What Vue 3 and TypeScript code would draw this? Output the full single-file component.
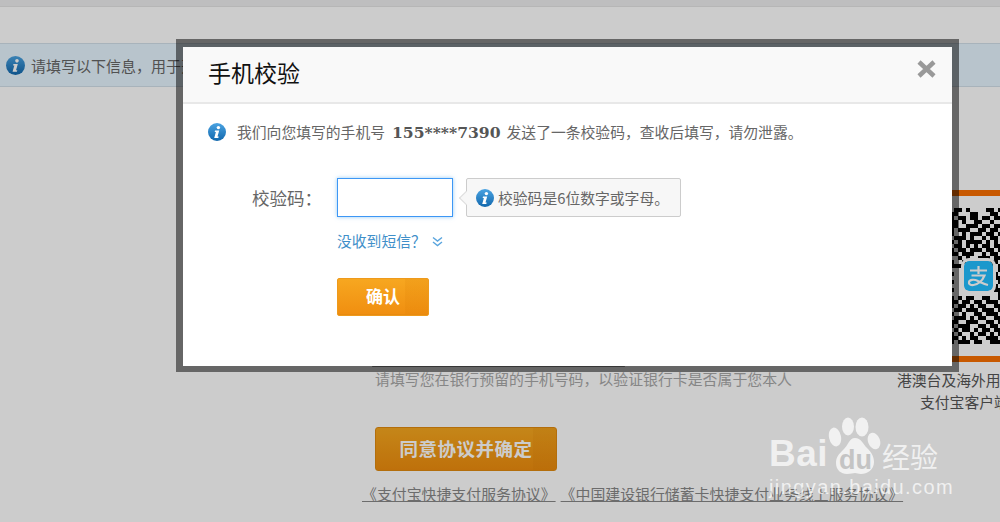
<script setup lang="ts">
// Alipay phone verification dialog over a dimmed bank-card page
const qrRows: string[] = [
  '00110100001101',
  '01100011000110',
  '11011011011011',
  '01101001100100',
  '11100111011011',
  '01011100110110',
  '11001011101101',
  '10111010010110',
  '11010111101010',
  '10110101011011',
  '11011011101101',
  '01101110010110',
  '10010100111011',
  '11001011100110',
  '01110110011101',
  '10000000000001',
  '11000000000010',
  '10000000000011',
  '11000000000001',
  '10000000000010',
  '11000000000011',
  '10000000000001',
  '11010110011001',
  '01101101101110',
  '11011010110011',
  '00110111011101',
  '11001001101110',
  '10111010110011',
  '01100111001101',
  '11011100110110',
  '10101101011011',
  '11010010110101',
  '01101011001110',
  '11011101100111'
]

const qrCells = qrRows.flatMap((row, y) =>
  [...row].flatMap((cell, x) => (cell === '1' ? [{ x: x * 4, y: y * 4 }] : []))
)
</script>

<template>
  <div class="page">
    <svg class="defs" width="0" height="0" aria-hidden="true">
      <defs>
        <linearGradient id="info-fill" x1="0" y1="0" x2="0" y2="1">
          <stop offset="0" stop-color="#4aa3e2" />
          <stop offset="1" stop-color="#1268ad" />
        </linearGradient>
        <symbol id="info" viewBox="0 0 18 18">
          <circle cx="9" cy="9" r="9" fill="url(#info-fill)" />
          <circle cx="10.4" cy="4.6" r="1.7" fill="#fff" />
          <path d="M7 7.6h4.2l-1.7 6h1.2l-.4 1.4H6.2l1.7-6H6.7z" fill="#fff" />
        </symbol>
      </defs>
    </svg>

    <div class="top-strip"></div>

    <div class="notice">
      <svg class="notice-icon"><use href="#info" /></svg>
      <span>请填写以下信息&#xFF0C;用于开通快捷支付服务</span>
    </div>

    <div class="content">
      <div class="main">
        <div class="bank-input"></div>
        <p class="hint">请填写您在银行预留的手机号码&#xFF0C;以验证银行卡是否属于您本人</p>
        <button class="agree" type="button">同意协议并确定</button>
        <p class="terms">
          <a>《支付宝快捷支付服务协议》</a>
          <a>《中国建设银行储蓄卡快捷支付业务线上服务协议》</a>
        </p>
      </div>

      <aside class="qr-side">
        <div class="qr-box">
          <svg class="qr" width="56" height="136" viewBox="0 0 56 136">
            <rect v-for="c in qrCells" :key="`${c.x}-${c.y}`" :x="c.x" :y="c.y" width="4" height="4" fill="#000" />
          </svg>
          <svg class="alipay" width="29" height="30" viewBox="0 0 29 30">
            <rect width="29" height="30" rx="5" fill="#22beff" />
            <path d="M6 9.500h17M14.500 5v8M7.500 14.500h13c-2 5-6.500 9-11 9.500-3 .3-5-1-4.500-3 .6-2.500 5-3 9-1 3 1.400 6 3 10 4" fill="none" stroke="#fff" stroke-width="2.200" />
          </svg>
        </div>
        <p class="qr-line">港澳台及海外用户请使用</p>
        <p class="qr-line second">支付宝客户端扫码</p>
      </aside>
    </div>

    <div class="overlay"></div>

    <section class="modal">
      <header class="modal-head">
        <h2>手机校验</h2>
        <svg class="close" width="19" height="18" viewBox="0 0 19 18">
          <path d="M2 2l15 14M17 2L2 16" stroke="#999" stroke-width="4.500" fill="none" />
        </svg>
      </header>

      <div class="modal-body">
        <p class="sent">
          <svg class="sent-icon"><use href="#info" /></svg>
          <span>我们向您填写的手机号</span>
          <b>155****7390</b>
          <span>发送了一条校验码&#xFF0C;查收后填写&#xFF0C;请勿泄露。</span>
        </p>

        <div class="form">
          <label class="code-label">校验码&#xFF1A;</label>
          <div class="code-row">
            <input class="code-input" type="text" />
            <div class="tip">
              <svg class="tip-icon"><use href="#info" /></svg>
              <span>校验码是6位数字或字母。</span>
            </div>
          </div>
          <a class="no-sms">
            没收到短信&#xFF1F;
            <svg width="11" height="11" viewBox="0 0 11 11">
              <path d="M1 1.500l4.500 3.500L10 1.500M1 6l4.500 3.500L10 6" fill="none" stroke="#5aa5de" stroke-width="1.400" />
            </svg>
          </a>
          <button class="confirm" type="button">确认</button>
        </div>
      </div>
    </section>

    <div class="watermark">
      <div class="wm-top">
        <span class="wm-bai">Bai</span>
        <svg class="wm-paw" width="54" height="58" viewBox="0 0 54 58">
          <ellipse cx="7" cy="20" rx="6" ry="9.500" fill="currentColor" transform="rotate(-12 7 20)" />
          <ellipse cx="20" cy="9.500" rx="6" ry="9" fill="currentColor" />
          <ellipse cx="34" cy="10" rx="6.500" ry="9.500" fill="currentColor" />
          <ellipse cx="46" cy="24" rx="6" ry="8.500" fill="currentColor" transform="rotate(-20 46 24)" />
          <path d="M27 21c6 0 8 6 12 10 5 5 7 9 7 14 0 8-7 12-13 12-3 0-4-1-6-1s-4 1-8 1C13 57 8 53 8 46c0-6 3-9 7-13 5-4 6-12 12-12z" fill="currentColor" />
        </svg>
        <span class="wm-du">du</span>
        <span class="wm-cn">经验</span>
      </div>
      <div class="wm-url">jingyan.baidu.com</div>
    </div>
  </div>
</template>

<style scoped>
.page {
  position: relative;
  width: 1000px;
  height: 522px;
  overflow: hidden;
  background: #fff;
  font-family: "Noto Sans CJK SC", "Liberation Sans", sans-serif;
  color: #666;
}

.defs {
  position: absolute;
}

.top-strip {
  height: 6px;
  background: #eeeeef;
  border-bottom: 1px solid #e4e4e4;
}

.notice {
  display: flex;
  align-items: center;
  gap: 6px;
  box-sizing: border-box;
  height: 44px;
  margin-top: 36px;
  padding-left: 6px;
  background: #e6f5ff;
  border-top: 1px solid #d3e0ea;
  border-bottom: 1px solid #d3e0ea;
  font-size: 15px;
  color: #666;
  white-space: nowrap;
}

.notice-icon {
  width: 19px;
  height: 19px;
}

.content {
  display: flex;
  padding-left: 362px;
}

.main {
  width: 535px;
  flex: none;
}

.bank-input {
  box-sizing: border-box;
  width: 253px;
  height: 40px;
  margin: 240px 0 0 10px;
  border: 1px solid #aaa;
  border-bottom-color: #888;
}

.hint {
  margin: 1px 0 0 13px;
  font-size: 14.900px;
  line-height: 22px;
  color: #a8a8a8;
  white-space: nowrap;
}

.agree {
  display: block;
  width: 182px;
  height: 44px;
  margin: 37px 0 0 13px;
  padding: 0 0 2px;
  border: 1px solid #e08a10;
  border-radius: 3px;
  background: linear-gradient(90deg, transparent 87%, rgba(214, 120, 0, 0.14) 87%), linear-gradient(#f7a81f, #ee8d0e);
  color: #fff;
  font: bold 18.500px "Liberation Serif", "Noto Sans CJK SC", serif;
  letter-spacing: 0.500px;
}

.terms {
  display: flex;
  gap: 5px;
  margin: 13px 0 0;
  font-size: 14.900px;
  line-height: 20px;
  white-space: nowrap;
  color: #888;
}

.terms a {
  text-decoration: underline;
}

.qr-side {
  flex: none;
  white-space: nowrap;
}

.qr-box {
  position: relative;
  box-sizing: border-box;
  width: 200px;
  height: 172px;
  margin: 103px 0 0 49px;
  padding-top: 12px;
  border-top: 6px solid #fa7000;
  border-bottom: 6px solid #fa7000;
}

.qr {
  display: block;
}

.alipay {
  position: absolute;
  left: 18px;
  top: 65px;
  border-radius: 5px;
  box-shadow: 0 0 0 3px #fff;
}

.qr-line {
  margin: 7px 0 0;
  font-size: 14.800px;
  line-height: 22px;
  color: #555;
}

.qr-line.second {
  margin: 0 0 0 23px;
}

.overlay {
  position: absolute;
  inset: 0;
  background: rgba(0, 0, 0, 0.2);
}

.modal {
  position: absolute;
  left: 176px;
  top: 39px;
  box-sizing: border-box;
  width: 783px;
  height: 333px;
  border: solid rgba(0, 0, 0, 0.5);
  border-width: 8px 7px 6px;
  background: #fff;
  background-clip: padding-box;
}

.modal-head {
  display: flex;
  align-items: center;
  justify-content: space-between;
  box-sizing: border-box;
  height: 57px;
  padding: 0 16px 2px 25px;
  background: #f9f9f9;
  border-bottom: 2px solid #e8e8e8;
}

.modal-head h2 {
  margin: 0 0 4px;
  font-size: 23px;
  font-weight: 400;
  color: #111;
}

.close {
  margin-bottom: 10px;
}

.modal-body {
  padding: 18px 25px 0;
}

.sent {
  display: flex;
  align-items: center;
  margin: 0;
  font-size: 14.800px;
  line-height: 20px;
  color: #666;
  white-space: nowrap;
}

.sent-icon {
  width: 18px;
  height: 18px;
  margin-right: 11px;
}

.sent b {
  margin: 0 6px 0 7px;
  font: bold 15.600px "DejaVu Serif", serif;
  color: #555;
}

.form {
  display: grid;
  grid-template-columns: 129px 1fr;
  margin-top: 36px;
}

.code-label {
  align-self: center;
  padding-right: 15px;
  font-size: 17.500px;
  text-align: right;
  color: #666;
}

.code-row {
  display: flex;
  gap: 13px;
}

.code-input {
  box-sizing: border-box;
  width: 116px;
  height: 39px;
  border: 1px solid #3d97f5;
  box-shadow: 0 0 4px rgba(82, 168, 236, 0.6);
  outline: none;
  padding: 0;
}

.tip {
  position: relative;
  display: flex;
  align-items: center;
  gap: 4px;
  box-sizing: border-box;
  width: 215px;
  height: 39px;
  padding-left: 9px;
  border: 1px solid #ccc;
  border-radius: 2px;
  background: #f7f7f7;
  font-size: 14.800px;
  color: #666;
  white-space: nowrap;
}

.tip::before {
  content: "";
  position: absolute;
  left: -6px;
  top: 14px;
  width: 9px;
  height: 9px;
  background: #f7f7f7;
  border-left: 1px solid #ddd;
  border-bottom: 1px solid #ddd;
  transform: rotate(45deg);
}

.tip-icon {
  width: 18px;
  height: 18px;
}

.no-sms {
  grid-column: 2;
  display: flex;
  align-items: center;
  gap: 6px;
  margin-top: 13px;
  font-size: 14.800px;
  line-height: 22px;
  color: #3f8fc9;
}

.confirm {
  grid-column: 2;
  width: 92px;
  height: 38px;
  margin-top: 26px;
  padding: 0 0 4px;
  border: 1px solid #ee9a1c;
  border-radius: 2px;
  background: linear-gradient(90deg, transparent 75%, rgba(214, 120, 0, 0.14) 75%), linear-gradient(#f7a720, #f08e10);
  box-shadow: inset 0 -1px 0 #e88a10;
  color: #fff;
  font: bold 17px "Liberation Serif", "Noto Sans CJK SC", serif;
}

.watermark {
  position: absolute;
  left: 768px;
  top: 415px;
  width: 190px;
  color: rgba(255, 255, 255, 0.72);
  font-family: "Liberation Sans", sans-serif;
  white-space: nowrap;
}

.wm-top {
  position: relative;
  height: 62px;
}

.wm-bai {
  position: absolute;
  left: 1px;
  top: 17px;
  font-size: 37px;
  font-weight: 700;
  line-height: 44px;
  letter-spacing: 0.500px;
}

.wm-paw {
  position: absolute;
  left: 60px;
  top: 2px;
}

.wm-du {
  position: absolute;
  left: 71px;
  top: 30px;
  font-size: 27px;
  font-weight: 700;
  line-height: 30px;
  color: #c4c4c4;
}

.wm-cn {
  position: absolute;
  left: 114px;
  top: 23px;
  font-family: "Noto Sans CJK SC", sans-serif;
  font-size: 28px;
  line-height: 36px;
}

.wm-url {
  margin-top: -1px;
  padding-left: 1px;
  font-size: 20px;
  line-height: 22px;
  letter-spacing: 1.400px;
}
</style>
